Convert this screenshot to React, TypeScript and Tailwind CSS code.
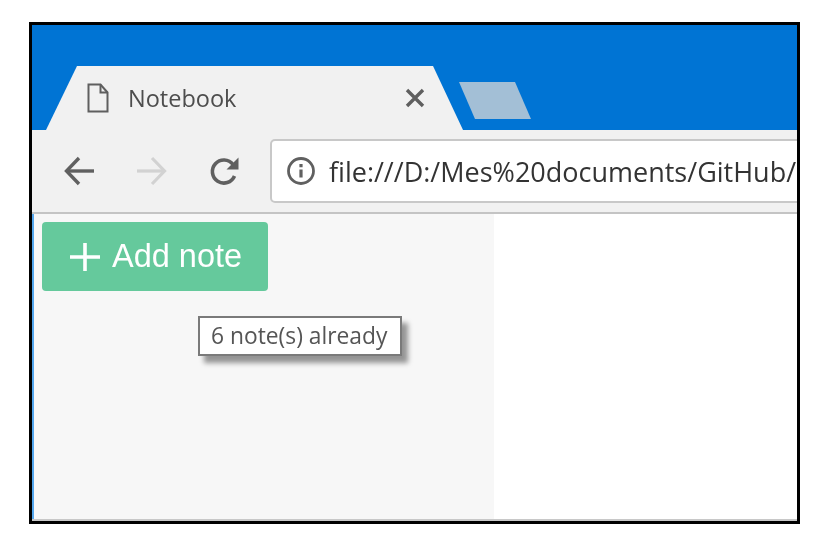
import React from "react";

const BackIcon = ({ color }: { color: string }) => (
  <svg width="32" height="32" viewBox="0 0 32 32" fill="none" stroke={color} strokeWidth="3.4">
    <path d="M31 16H4" />
    <path d="M16 3 3.5 16 16 29" />
  </svg>
);

const ForwardIcon = () => (
  <svg width="32" height="32" viewBox="0 0 32 32" fill="none" stroke="#d2d2d2" strokeWidth="3.2">
    <path d="M1 16h27" />
    <path d="M16 3l12.5 13L16 29" />
  </svg>
);

const ReloadIcon = () => (
  <svg width="32" height="32" viewBox="0 0 32 32" fill="none">
    <path d="M25.5 21a11.5 11.5 0 1 1-1.5-11.5" stroke="#606060" strokeWidth="3.6" />
    <path d="M29.5 2.5v12h-12z" fill="#606060" />
  </svg>
);

export default function App() {
  return (
    <div className="w-[825px] h-[544px] bg-white pt-[22px] pl-[29px] overflow-hidden">
      <div className="w-[771px] h-[502px] border-[3px] border-black bg-[#0074d4] flex flex-col blur-[0.7px] overflow-hidden">
        {/* tab strip */}
        <div className="h-[105px] shrink-0 flex items-end pl-[14px]">
          <div className="w-[417px] h-[64px] bg-[#f1f1f1] [clip-path:polygon(31px_0,387px_0,417px_100%,0_100%)] flex items-center pl-[41px] pr-[38px] py-[2px]">
            <svg width="22" height="30" viewBox="0 0 22 30" fill="none" stroke="#5f5f5f" strokeWidth="2" className="shrink-0">
              <path d="M1.5 1.5h12l7 8v19h-19z" />
              <path d="M13.5 1.5v8h7" />
            </svg>
            <span className="ml-[19px] mt-[2px] text-[23.5px] leading-none text-[#4d4d4d] font-['Open_Sans',sans-serif]">Notebook</span>
            <svg width="20" height="20" viewBox="0 0 20 20" stroke="#5f5f5f" strokeWidth="3.4" className="ml-auto">
              <path d="M2 2l16 16M18 2 2 18" />
            </svg>
          </div>
          <div className="ml-[-4px] mb-[11px] w-[72px] h-[37px] bg-[#a3bfd6] [clip-path:polygon(0_0,56px_0,100%_100%,16px_100%)]" />
        </div>

        {/* toolbar */}
        <div className="h-[84px] shrink-0 bg-[#f1f1f1] border-b-[2px] border-[#c4c4c4] flex items-center pl-[31px]">
          <BackIcon color="#606060" />
          <div className="ml-[41px]">
            <ForwardIcon />
          </div>
          <div className="ml-[41px]">
            <ReloadIcon />
          </div>
          <div className="ml-[29px] flex-1 h-[64px] mr-[-20px] bg-white border-[2px] border-[#c8c8c8] rounded-[5px] flex items-center pl-[14px] overflow-hidden">
            <svg width="30" height="30" viewBox="0 0 30 30" fill="none" className="shrink-0">
              <circle cx="15" cy="15" r="12.5" stroke="#606060" strokeWidth="2.8" />
              <path d="M15 13.5v8" stroke="#606060" strokeWidth="3.2" />
              <path d="M15 8v3.2" stroke="#606060" strokeWidth="3.2" />
            </svg>
            <span className="ml-[13px] mt-[1px] text-[27px] leading-none text-[#333] whitespace-nowrap font-['Open_Sans',sans-serif]">
              file:///D:/Mes%20documents/GitHub/
            </span>
          </div>
        </div>

        {/* page */}
        <div className="relative flex-1 min-h-0 bg-white flex">
          <div className="w-[462px] bg-[#f7f7f7] border-l-[2px] border-[#55a7ee] pl-[8px] pt-[8px]">
            <button className="w-[226px] h-[69px] bg-[#65c99c] rounded-[4px] flex items-center pl-[27px] text-white font-['Liberation_Sans',sans-serif] text-[32.5px]">
              <svg width="32" height="32" viewBox="0 0 32 32" stroke="#fff" strokeWidth="3.6" className="shrink-0">
                <path d="M16 2v28M1 16h30" />
              </svg>
              <span className="ml-[11px] leading-none">Add note</span>
            </button>
          </div>
          <div className="absolute inset-x-0 bottom-0 h-[2px] bg-[#c8c8c8]" />
          <div className="absolute left-[166px] top-[102px] w-[204px] h-[40px] bg-white border-[2px] border-[#7a7a7a] shadow-[6px_7px_5px_rgba(0,0,0,0.4)] flex items-center pl-[11px] pt-[1px] text-[22.8px] leading-none text-[#555] whitespace-nowrap font-['Open_Sans',sans-serif]">
            6 note(s) already
          </div>
        </div>
      </div>
    </div>
  );
}
